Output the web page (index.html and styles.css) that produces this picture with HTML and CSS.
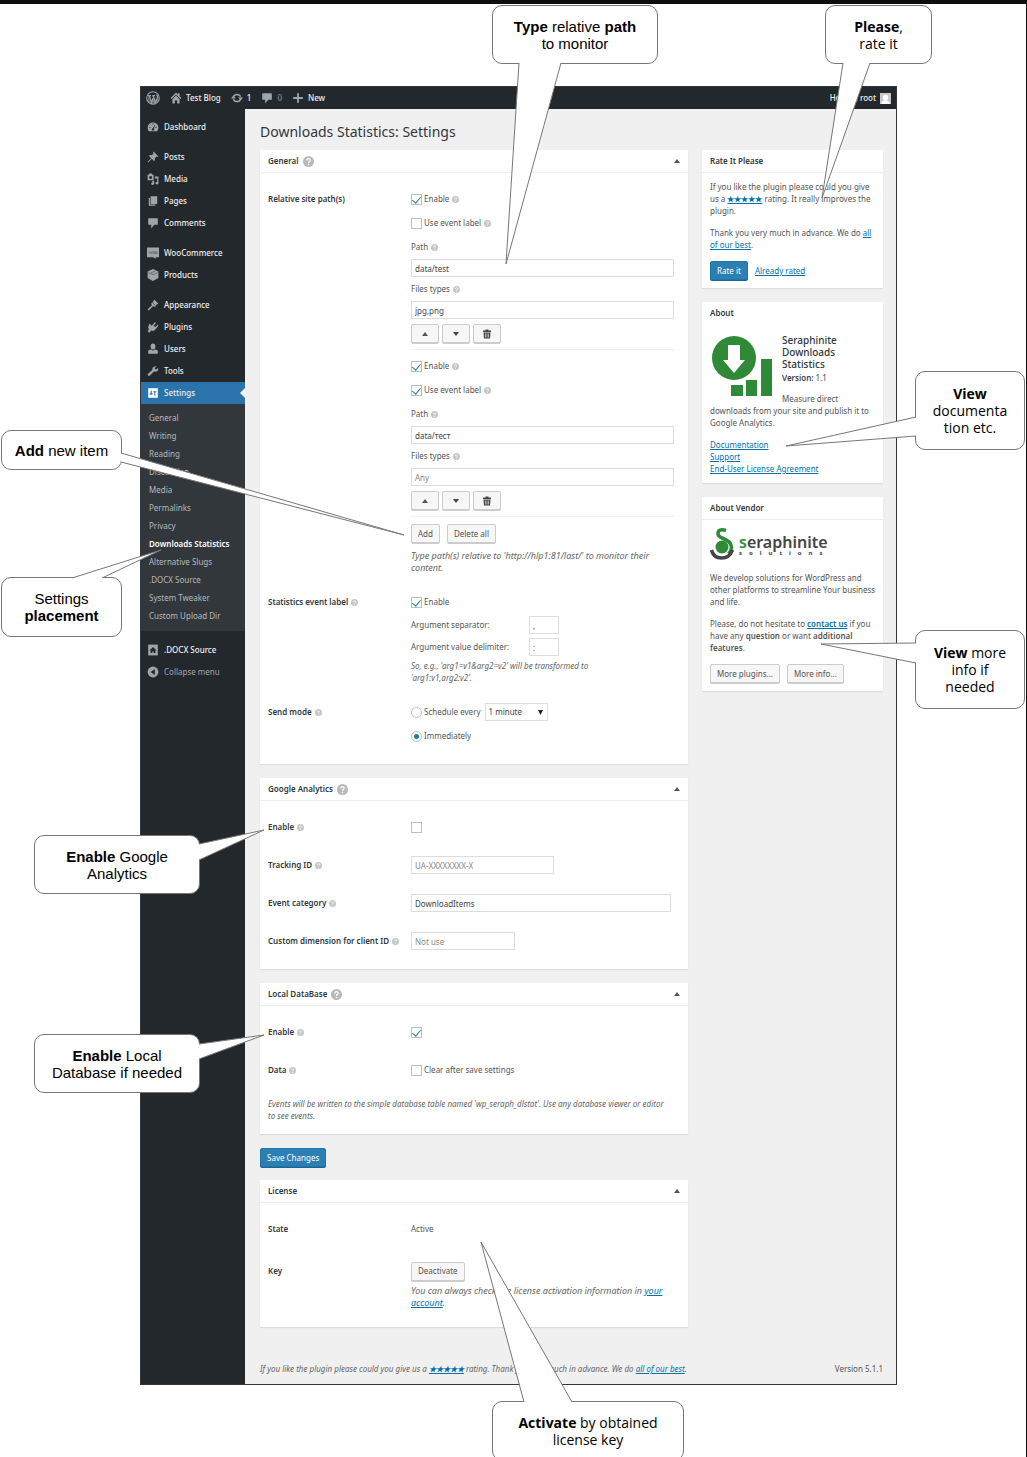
FILE: index.html
```
<!DOCTYPE html>
<html lang="en">
    <head>
        <meta charset="utf-8">
        <title>Downloads Statistics: Settings</title>
        <link rel="stylesheet" href="styles.css">
    </head>
    <body>
        <svg class="sprite" aria-hidden="true">
            <symbol id="help" viewBox="0 0 20 20">
                <circle cx="10" cy="10" r="10" fill="#b8b9bb"/>
                <path d="M7 8 C7 3.500 13.500 4 13 8 C12.500 10 10 10 10 12.500" fill="none" stroke="#fff" stroke-width="2.200"/>
                <circle cx="10" cy="15.500" r="1.400" fill="#fff"/>
            </symbol>
            <symbol id="trash" viewBox="0 0 20 20">
                <path d="M7 1h6v2h5v3H2V3h5zM3 7h14l-1 12H4z"/>
                <path d="M7 9v8M10 9v8M13 9v8" stroke="#f7f7f7" stroke-width="1.200"/>
            </symbol>
            <symbol id="comment" viewBox="0 0 20 20">
                <path d="M3 2h14q1 0 1 1v9q0 1-1 1h-5l-5 6v-6H3q-1 0-1-1V3q0-1 1-1z"/>
            </symbol>
        </svg>

        <div class="page">
            <div class="window">
                <header class="adminbar">
                    <a href="#" aria-label="WordPress"><svg class="icon wp" viewBox="0 0 20 20"><circle cx="10" cy="10" r="9" fill="none" stroke="currentColor" stroke-width="1.500"/><path d="M2.500 6 7 17.500 10 9l3.500 8.500L17.500 7Q18 10 17 14L12 19H8L3 15z" opacity=".55"/><path d="M3 6.500h4M9 6.500h4M4.500 6.500l3.500 10 2-6M10 6.500l3.500 10 3-8q0-2-1.500-3" fill="none" stroke="currentColor" stroke-width="1.800"/></svg></a>
                    <a href="#"><svg class="icon" viewBox="0 0 20 20"><path d="M10 1 1 10l1.500 1.500L10 4l7.500 7.500L19 10l-3-3V2h-3v2zM4 12l6-6 6 6v7h-4v-5H8v5H4z"/></svg>Test Blog</a>
                    <a href="#"><svg class="icon" viewBox="0 0 20 20"><path d="M4 8a6.500 6.500 0 0 1 12 0M16 12a6.500 6.500 0 0 1-12 0" fill="none" stroke="currentColor" stroke-width="2.500"/><path d="M0 11 4 6l4 5zM12 9h8l-4 5z"/></svg>1</a>
                    <a href="#" class="dim"><svg class="icon"><use href="#comment"/></svg>0</a>
                    <a href="#"><svg class="icon" viewBox="0 0 20 20"><path d="M8.500 2h3v6.500H18v3h-6.500V18h-3v-6.500H2v-3h6.500z"/></svg>New</a>
                    <a href="#" class="account">Howdy, root<svg class="avatar" viewBox="0 0 20 20"><path fill="#c8c8c8" d="M0 0h20v20H0z"/><circle cx="10" cy="8" r="5" fill="#fff"/><path fill="#fff" d="M2 20q1-7 8-7t8 7z"/></svg></a>
                </header>

                <div class="body">
                    <nav class="menu">
                        <ul>
                            <li><a href="#"><svg class="icon" viewBox="0 0 20 20"><path d="M3 17a9 9 0 1 1 14 0z"/><path d="M10 14 13 7M4 11h2M6 6l1 1M10 4v2M14 11h2" stroke="#23282d" stroke-width="1.500"/><circle cx="10" cy="14" r="2" fill="#23282d"/></svg>Dashboard</a></li>
                            <li class="gap"><a href="#"><svg class="icon" viewBox="0 0 20 20"><path d="m11 1 8 8-2 1-1-1-3 3q1 3-1 5l-4-4-6 6-1-1 6-6-4-4q2-2 5-1l3-3-1-1z"/></svg>Posts</a></li>
                            <li><a href="#"><svg class="icon" viewBox="0 0 20 20"><path d="M1 3h2l1-2h4l1 2h2v9H1zM6 5a2.500 2.500 0 1 0 .1 0z" fill-rule="evenodd"/><path d="M13 6h6v11a2.500 2 0 1 1-2-2V9h-4zM9 13h3v5a2.500 2 0 1 1-3-2z"/></svg>Media</a></li>
                            <li><a href="#"><svg class="icon" viewBox="0 0 20 20"><path d="M6 2h11v13H6zM3 5h2v11h9v2H3z"/></svg>Pages</a></li>
                            <li><a href="#"><svg class="icon"><use href="#comment"/></svg>Comments</a></li>
                            <li class="gap"><a href="#"><svg class="icon" viewBox="0 0 20 20"><path d="M0 1h20v16h-6l1 3-5-3H0z"/><path d="m3 7 1.500 4L6 8l1.500 3L9 7M10 8h3v3h-3zM14 8h3v3h-3z" fill="none" stroke="#555a60"/></svg>WooCommerce</a></li>
                            <li><a href="#"><svg class="icon" viewBox="0 0 20 20"><path d="m10 0 9 4v11l-9 5-9-5V4z"/><path d="m2 6 8 3.500L18 6M6 7l8-4" fill="none" stroke="#555a60" stroke-width="1.200"/></svg>Products</a></li>
                            <li class="gap"><a href="#"><svg class="icon" viewBox="0 0 20 20"><path d="m12 1 7 7-3 1-2 4-4-1-7 7-2-2 7-6-1-4 3-2z"/><path d="m9 6 5 5" stroke="#23282d"/></svg>Appearance</a></li>
                            <li><a href="#"><svg class="icon" viewBox="0 0 20 20"><path d="M4 4 8 8l5-6 2 1.500L11 8l3 2 4-4 1 2-4 5q-3 5-8 3l-3 3.500-3-2L3 14Q1 9 4 4z"/></svg>Plugins</a></li>
                            <li><a href="#"><svg class="icon" viewBox="0 0 20 20"><ellipse cx="10" cy="6" rx="4" ry="5"/><path d="M2 18v-4q0-3 5-3l3 2 3-2q5 0 5 3v4z"/></svg>Users</a></li>
                            <li><a href="#"><svg class="icon" viewBox="0 0 20 20"><path d="M16 2 13 5l.500 2L15 7.500 18.500 5q1 5-3.500 6-2 .500-3-.500l-8 8q-3 0-3-3l8-7.500Q8 2 16 2z"/></svg>Tools</a></li>
                            <li class="current"><a href="#"><svg class="icon" viewBox="0 0 20 20"><path d="M2 2h16v16H2z"/><path d="M7 6v7M13 7v7M4.500 11.500h5M10.500 8h5" stroke="#2a74ab" stroke-width="1.800"/></svg>Settings</a></li>
                        </ul>
                        <ul class="submenu">
                            <li><a href="#">General</a></li>
                            <li><a href="#">Writing</a></li>
                            <li><a href="#">Reading</a></li>
                            <li><a href="#">Discussion</a></li>
                            <li><a href="#">Media</a></li>
                            <li><a href="#">Permalinks</a></li>
                            <li><a href="#">Privacy</a></li>
                            <li><a href="#" class="active">Downloads Statistics</a></li>
                            <li><a href="#">Alternative Slugs</a></li>
                            <li><a href="#">.DOCX Source</a></li>
                            <li><a href="#">System Tweaker</a></li>
                            <li><a href="#">Custom Upload Dir</a></li>
                        </ul>
                        <ul>
                            <li class="gap"><a href="#"><svg class="icon" viewBox="0 0 20 20"><path d="M2 1h16v18H2z"/><path d="m4 11 6-6 6 6h-2v4h-3v-3H9v3H6v-4z" fill="#23282d"/></svg>.DOCX Source</a></li>
                            <li class="collapse"><a href="#"><svg class="icon" viewBox="0 0 20 20"><circle cx="10" cy="10" r="9"/><path d="M13 5v10l-7-5z" fill="#23282d"/></svg>Collapse menu</a></li>
                        </ul>
                    </nav>

                    <main class="content">
                        <h1>Downloads Statistics: Settings</h1>
                        <div class="columns">
                            <div class="main-col">
                                <section class="box">
                                    <h2>General <svg class="help-big"><use href="#help"/></svg><span class="toggle"></span></h2>
                                    <div class="inside">
                                        <div class="row">
                                            <div class="name">Relative site path(s)</div>
                                            <div class="field">
                                                <div class="item">
                                                    <label class="line"><input type="checkbox" checked>Enable <svg class="help"><use href="#help"/></svg></label>
                                                    <label class="line"><input type="checkbox">Use event label <svg class="help"><use href="#help"/></svg></label>
                                                    <label class="line" for="path1">Path <svg class="help"><use href="#help"/></svg></label>
                                                    <input type="text" id="path1" value="data/test">
                                                    <label class="line" for="types1">Files types <svg class="help"><use href="#help"/></svg></label>
                                                    <input type="text" id="types1" value="jpg,png">
                                                    <div class="buttons tools">
                                                        <button type="button" aria-label="Move up"><span class="up"></span></button>
                                                        <button type="button" aria-label="Move down"><span class="down"></span></button>
                                                        <button type="button" aria-label="Delete"><svg class="trash"><use href="#trash"/></svg></button>
                                                    </div>
                                                </div>
                                                <div class="item">
                                                    <label class="line"><input type="checkbox" checked>Enable <svg class="help"><use href="#help"/></svg></label>
                                                    <label class="line"><input type="checkbox" checked>Use event label <svg class="help"><use href="#help"/></svg></label>
                                                    <label class="line" for="path2">Path <svg class="help"><use href="#help"/></svg></label>
                                                    <input type="text" id="path2" value="data/тест">
                                                    <label class="line" for="types2">Files types <svg class="help"><use href="#help"/></svg></label>
                                                    <input type="text" id="types2" placeholder="Any">
                                                    <div class="buttons tools">
                                                        <button type="button" aria-label="Move up"><span class="up"></span></button>
                                                        <button type="button" aria-label="Move down"><span class="down"></span></button>
                                                        <button type="button" aria-label="Delete"><svg class="trash"><use href="#trash"/></svg></button>
                                                    </div>
                                                </div>
                                                <div class="buttons add">
                                                    <button type="button">Add</button>
                                                    <button type="button">Delete all</button>
                                                </div>
                                                <p class="desc large">Type path(s) relative to 'http://hlp1:81/last/' to monitor their content.</p>
                                            </div>
                                        </div>
                                        <div class="row">
                                            <div class="name">Statistics event label <svg class="help"><use href="#help"/></svg></div>
                                            <div class="field">
                                                <label class="line"><input type="checkbox" checked>Enable</label>
                                                <div class="arg"><label for="sep">Argument separator:</label><input type="text" id="sep" value=","></div>
                                                <div class="arg"><label for="delim">Argument value delimiter:</label><input type="text" id="delim" value=":"></div>
                                                <p class="desc short">So, e.g., 'arg1=v1&amp;arg2=v2' will be transformed to 'arg1:v1,arg2:v2'.</p>
                                            </div>
                                        </div>
                                        <div class="row">
                                            <div class="name">Send mode <svg class="help"><use href="#help"/></svg></div>
                                            <div class="field">
                                                <div class="line">
                                                    <label class="line"><input type="radio" name="mode">Schedule every</label>
                                                    <select aria-label="Interval"><option>1 minute</option></select>
                                                </div>
                                                <label class="line"><input type="radio" name="mode" checked>Immediately</label>
                                            </div>
                                        </div>
                                    </div>
                                </section>

                                <section class="box">
                                    <h2>Google Analytics <svg class="help-big"><use href="#help"/></svg><span class="toggle"></span></h2>
                                    <div class="inside">
                                        <div class="row">
                                            <label class="name" for="ga">Enable <svg class="help"><use href="#help"/></svg></label>
                                            <div class="field line"><input type="checkbox" id="ga"></div>
                                        </div>
                                        <div class="row">
                                            <label class="name" for="tracking">Tracking ID <svg class="help"><use href="#help"/></svg></label>
                                            <div class="field line"><input type="text" id="tracking" class="medium" placeholder="UA-XXXXXXXX-X"></div>
                                        </div>
                                        <div class="row">
                                            <label class="name" for="category">Event category <svg class="help"><use href="#help"/></svg></label>
                                            <div class="field line"><input type="text" id="category" class="wide" value="DownloadItems"></div>
                                        </div>
                                        <div class="row">
                                            <label class="name" for="dimension">Custom dimension for client ID <svg class="help"><use href="#help"/></svg></label>
                                            <div class="field line"><input type="text" id="dimension" class="small" placeholder="Not use"></div>
                                        </div>
                                    </div>
                                </section>

                                <section class="box">
                                    <h2>Local DataBase <svg class="help-big"><use href="#help"/></svg><span class="toggle"></span></h2>
                                    <div class="inside compact">
                                        <div class="row">
                                            <label class="name" for="db">Enable <svg class="help"><use href="#help"/></svg></label>
                                            <div class="field line"><input type="checkbox" id="db" checked></div>
                                        </div>
                                        <div class="row">
                                            <div class="name">Data <svg class="help"><use href="#help"/></svg></div>
                                            <div class="field"><label class="line"><input type="checkbox">Clear after save settings</label></div>
                                        </div>
                                        <p class="desc">Events will be written to the simple database table named 'wp_seraph_dlstat'. Use any database viewer or editor to see events.</p>
                                    </div>
                                </section>

                                <button type="submit" class="primary save">Save Changes</button>

                                <section class="box">
                                    <h2>License<span class="toggle"></span></h2>
                                    <div class="inside">
                                        <div class="row">
                                            <div class="name">State</div>
                                            <div class="field line">Active</div>
                                        </div>
                                        <div class="row key">
                                            <div class="name">Key</div>
                                            <div class="field">
                                                <div class="line"><button type="button">Deactivate</button></div>
                                                <p class="desc large">You can always check the license activation information in <a href="#">your account</a>.</p>
                                            </div>
                                        </div>
                                    </div>
                                </section>
                            </div>

                            <aside class="side-col">
                                <section class="box">
                                    <h2>Rate It Please</h2>
                                    <div class="text">
                                        <p>If you like the plugin please could you give us a <a href="#" class="stars">★★★★★</a> rating. It really improves the plugin.</p>
                                        <p>Thank you very much in advance. We do <a href="#">all of our best</a>.</p>
                                        <div class="buttons">
                                            <button type="button" class="primary">Rate it</button>
                                            <a href="#">Already rated</a>
                                        </div>
                                    </div>
                                </section>

                                <section class="box about">
                                    <h2>About</h2>
                                    <div class="text">
                                        <svg class="product" viewBox="0 0 62 62">
                                            <g fill="#2f8a37">
                                                <circle cx="23" cy="23" r="22"/>
                                                <path d="M50 24h11v37H50z"/>
                                                <path d="M35 45h11v16H35zM20 50h12v11H20z" stroke="#fff" stroke-width="2"/>
                                                <path d="M35 45h11v16H35zM20 50h12v11H20z"/>
                                            </g>
                                            <path d="M17 10h12v15h5L23 38 12 25h5z" fill="#fff"/>
                                        </svg>
                                        <h3>Seraphinite Downloads Statistics</h3>
                                        <p class="version"><b>Version:</b> 1.1</p>
                                        <p>Measure direct downloads from your site and publish it to Google Analytics.</p>
                                        <ul>
                                            <li><a href="#">Documentation</a></li>
                                            <li><a href="#">Support</a></li>
                                            <li><a href="#">End-User License Agreement</a></li>
                                        </ul>
                                    </div>
                                </section>

                                <section class="box">
                                    <h2>About Vendor</h2>
                                    <div class="text">
                                        <div class="vendor">
                                            <svg class="mark" viewBox="0 0 24 32">
                                                <circle cx="12" cy="19" r="6.500" fill="#2f8a37"/>
                                                <path d="M16 2.500Q8 0 8 6q0 2 4 4 9 3 9.500 9 0 4-3 7" fill="none" stroke="#2f8a37" stroke-width="3.500"/>
                                                <path d="M1.500 22q2 8 10 8 8 0 11-8" fill="none" stroke="#444" stroke-width="3.500"/>
                                            </svg>
                                            <div>
                                                <div class="brand"><span>s</span>eraphinite</div>
                                                <div class="tagline">solutions</div>
                                            </div>
                                        </div>
                                        <p>We develop solutions for WordPress and other platforms to streamline Your business and life.</p>
                                        <p>Please, do not hesitate to <a href="#"><b>contact us</b></a> if you have any <b>question</b> or want <b>additional features</b>.</p>
                                        <div class="buttons">
                                            <button type="button">More plugins...</button>
                                            <button type="button">More info...</button>
                                        </div>
                                    </div>
                                </section>
                            </aside>
                        </div>
                        <footer>
                            <p class="desc">If you like the plugin please could you give us a <a href="#" class="stars">★★★★★</a> rating. Thank you very much in advance. We do <a href="#">all of our best</a>.</p>
                            <p>Version 5.1.1</p>
                        </footer>
                    </main>
                </div>
            </div>

            <!-- Annotations laid over the settings window -->
            <div class="callout c-type"><p><b>Type</b> relative <b>path</b><br>to monitor</p></div>
            <div class="callout c-rate alt"><p><b>Please</b>,<br>rate it</p></div>
            <div class="callout c-docs alt"><p><b>View</b><br>documenta<br>tion etc.</p></div>
            <div class="callout c-add"><p><b>Add</b> new item</p></div>
            <div class="callout c-place"><p>Settings<br><b>placement</b></p></div>
            <div class="callout c-more alt"><p><b>View</b> more<br>info if<br>needed</p></div>
            <div class="callout c-ga"><p><b>Enable</b> Google<br>Analytics</p></div>
            <div class="callout c-db"><p><b>Enable</b> Local<br>Database if needed</p></div>
            <div class="callout c-key alt"><p><b>Activate</b> by obtained<br>license key</p></div>
            <svg class="tails" width="1026" height="1453" aria-hidden="true">
                <path d="M519 59 506 260 561 59"/>
                <path d="M843 59 822 194 870 59"/>
                <path d="M916 413 786 442 916 432"/>
                <path d="M121 449 404 531 121 458"/>
                <path d="M72 574 161 546 102 574"/>
                <path d="M916 639 821 640 916 659"/>
                <path d="M199 840 264 826 199 856"/>
                <path d="M199 1040 264 1031 199 1055"/>
                <path d="M524 1398 481 1238 572 1398"/>
            </svg>
        </div>
    </body>
</html>
```
FILE: styles.css
```
* {
    box-sizing: border-box;
}
body {
    margin: 0;
    background: #fff;
    font-family: "Noto Sans", "Open Sans", sans-serif;
    font-size: 8px;
    line-height: 12px;
    color: #555;
}
h1, h2, h3, p, ul {
    margin: 0;
    padding: 0;
    font-weight: normal;
}
ul {
    list-style: none;
}
b {
    font-weight: 600;
}
a {
    color: #0073aa;
}
.sprite {
    display: none;
}
.page {
    position: relative;
    overflow: hidden;
    border-top: 4px solid #0c0d10;
    border-right: 1px solid #111;
    padding: 82px 129px 75px 140px;
}
.window {
    border: 1px solid #33373b;
    background: #f0f0f1;
}

/* Top bar */
.adminbar {
    display: flex;
    align-items: center;
    gap: 10px;
    height: 22px;
    padding: 0 5px;
    background: #23282d;
}
.adminbar a {
    display: flex;
    align-items: center;
    gap: 4px;
    color: #eee;
    font-weight: 500;
    text-decoration: none;
}
.adminbar .dim {
    color: #8a8d90;
}
.adminbar .account {
    margin-left: auto;
}
.icon {
    flex: none;
    width: 12px;
    height: 12px;
    fill: currentColor;
    color: #a0a5aa;
}
.icon.wp {
    width: 14px;
    height: 14px;
}
.avatar {
    width: 11px;
    height: 11px;
}

/* Left menu */
.body {
    display: flex;
    align-items: stretch;
}
.menu {
    flex: none;
    width: 104px;
    padding-top: 7px;
    background: #23282d;
}
.menu a {
    display: flex;
    align-items: center;
    gap: 5px;
    height: 22px;
    padding: 0 6px;
    color: #eee;
    font-weight: 500;
    text-decoration: none;
}
.menu .gap {
    margin-top: 8px;
}
.menu .current {
    position: relative;
    background: #2a74ab;
}
.menu .current .icon {
    color: #fff;
}
.menu .current::after {
    content: "";
    position: absolute;
    right: 0;
    top: 6px;
    border: 5px solid transparent;
    border-left: 0;
    border-right-color: #f0f0f1;
}
.menu .submenu {
    padding: 5px 0 6px;
    background: #32373c;
}
.menu .submenu a {
    height: 18px;
    padding: 0 8px;
    color: #b4b9be;
    font-weight: normal;
}
.menu .submenu .active {
    color: #fff;
    font-weight: 600;
}
.menu .collapse a {
    color: #a0a5aa;
    font-weight: normal;
}

/* Content */
.content {
    flex: 1;
    min-width: 0;
    padding: 13px 13px 7px 15px;
}
h1 {
    margin-bottom: 8px;
    font-size: 14px;
    line-height: 20px;
    color: #32373c;
}
.columns {
    display: grid;
    grid-template-columns: 1fr 181px;
    gap: 14px;
}
.main-col,
.side-col {
    min-width: 0;
}
.box {
    margin-bottom: 14px;
    background: #fff;
    box-shadow: 0 1px 1px rgba(0,0,0,0.08);
}
.box h2 {
    display: flex;
    align-items: center;
    gap: 4px;
    height: 23px;
    padding: 0 8px;
    border-bottom: 1px solid #eee;
    font-size: 8px;
    font-weight: 600;
    color: #32373c;
}
.box.about h2 {
    border-color: transparent;
}
.toggle, .up {
    border: 3px solid transparent;
    border-top: 0;
    border-bottom: 4px solid #555;
}
.down {
    border: 3px solid transparent;
    border-bottom: 0;
    border-top: 4px solid #444;
}
.toggle {
    margin-left: auto;
}
.help-big {
    width: 11px;
    height: 11px;
}
.help {
    width: 7px;
    height: 7px;
    margin-left: 3px;
    opacity: 0.8;
}

/* Form rows */
.inside {
    display: flex;
    flex-direction: column;
    gap: 14px;
    padding: 14px 8px 16px;
}
.inside.compact {
    padding-bottom: 10px;
}
.row {
    display: grid;
    grid-template-columns: 143px 1fr;
}
.row.key {
    padding-top: 4px;
}
.name, .line {
    display: flex;
    align-items: center;
    height: 24px;
}
.name {
    font-weight: 600;
    color: #32373c;
    white-space: nowrap;
}
.field {
    padding-right: 6px;
}
.item {
    margin-bottom: 4px;
    border-bottom: 1px solid #eee;
}
.arg {
    display: grid;
    grid-template-columns: 118px 30px;
    align-items: center;
    height: 22px;
}
.desc {
    padding: 2px 0;
    font-style: italic;
    color: #666;
}
.desc.large {
    font-size: 9px;
}
.desc.short {
    max-width: 220px;
}
.compact .desc {
    padding-right: 8px;
}
input, select, button {
    margin: 0;
    font: inherit;
    color: #444;
}
input[type="text"], select {
    display: block;
    width: 100%;
    height: 18px;
    padding: 0 3px;
    border: 1px solid #ddd;
    border-radius: 0;
    background: #fff;
}
input[type="text"].wide {
    width: 260px;
}
input[type="text"].medium {
    width: 143px;
}
input[type="text"].small {
    width: 104px;
}
input::placeholder {
    color: #888;
}
select {
    appearance: none;
    width: 63px;
    margin-left: 4px;
    background: #fff url("data:image/svg+xml,%3Csvg xmlns='http://www.w3.org/2000/svg' width='5' height='5'%3E%3Cpath d='M0 0h5L2.500 5z' fill='%23222'/%3E%3C/svg%3E") no-repeat right 4px center;
}
input[type="checkbox"], input[type="radio"] {
    appearance: none;
    display: grid;
    place-items: center;
    flex: none;
    width: 11px;
    height: 11px;
    margin-right: 2px;
    border: 1px solid #bbc0c4;
    background: #fff;
}
input[type="radio"] {
    border-radius: 50%;
}
input[type="checkbox"]:checked::before {
    content: "";
    width: 4px;
    height: 7px;
    margin-bottom: 2px;
    border: solid #1e7f9c;
    border-width: 0 1px 1px 0;
    transform: rotate(40deg);
}
input[type="radio"]:checked::before {
    content: "";
    width: 5px;
    height: 5px;
    border-radius: 50%;
    background: #1e7f9c;
}

/* Buttons */
.buttons {
    display: flex;
    align-items: center;
    gap: 7px;
}
.tools {
    gap: 3px;
    padding: 5px 0 6px;
}
.add {
    padding: 3px 0 5px;
}
button {
    display: inline-flex;
    align-items: center;
    justify-content: center;
    height: 19px;
    padding: 0 6px;
    border: 1px solid #ccc;
    border-radius: 2px;
    background: #f7f7f7;
    box-shadow: 0 1px 0 #ccc;
    color: #555;
    white-space: nowrap;
}
.tools button {
    width: 28px;
}
.trash {
    width: 10px;
    height: 10px;
    fill: #444;
}
button.primary {
    border-color: #1f77a8;
    background: #2b7fb3;
    box-shadow: 0 1px 0 #1a6690;
    color: #fff;
}
.save {
    display: flex;
    margin-bottom: 13px;
}

/* Side boxes */
.text {
    padding: 8px 6px 8px 8px;
}
.text p {
    margin-bottom: 10px;
}
.stars {
    font-weight: bold;
}
.about .text {
    padding-top: 9px;
}
.product {
    float: left;
    width: 62px;
    height: 62px;
    margin: 1px 9px 0 1px;
}
.about h3 {
    font-size: 10px;
    font-weight: 500;
    color: #32373c;
}
.about .version {
    margin: 2px 0 9px;
    color: #444;
}
.vendor {
    display: flex;
    gap: 5px;
    height: 32px;
    margin-bottom: 12px;
}
.mark {
    width: 24px;
    height: 32px;
}
.brand {
    padding-top: 6px;
    font-size: 16px;
    font-weight: 600;
    line-height: 16px;
    color: #444;
}
.brand span {
    color: #2f8a37;
}
.tagline {
    font-size: 6px;
    font-weight: 700;
    line-height: 6px;
    letter-spacing: 7px;
    color: #444;
}
footer {
    display: flex;
    justify-content: space-between;
    align-items: center;
    padding-top: 20px;
}

/* Callouts */
.callout {
    position: absolute;
    display: flex;
    align-items: center;
    justify-content: center;
    border: 1px solid #777;
    border-radius: 10px;
    background: #fff;
    font-family: "Liberation Sans", Arial, sans-serif;
    font-size: 15px;
    line-height: 17px;
    text-align: center;
    white-space: nowrap;
    color: #000;
}
.callout b {
    font-weight: bold;
}
.callout.alt {
    font-family: "Open Sans", sans-serif;
    font-size: 14px;
}
.c-type { left: 492px; top: 1px; width: 166px; height: 59px; }
.c-rate { left: 825px; top: 1px; width: 107px; height: 59px; }
.c-docs { left: 915px; top: 367px; width: 110px; height: 79px; }
.c-add { left: 1px; top: 426px; width: 121px; height: 40px; }
.c-place { left: 1px; top: 573px; width: 121px; height: 60px; }
.c-more { left: 915px; top: 626px; width: 110px; height: 79px; }
.c-ga { left: 34px; top: 831px; width: 166px; height: 59px; }
.c-db { left: 34px; top: 1030px; width: 166px; height: 59px; }
.c-key { left: 492px; top: 1397px; width: 192px; height: 60px; }
.tails {
    position: absolute;
    left: 0;
    top: 0;
    fill: #fff;
    stroke: #777;
    pointer-events: none;
}
```
